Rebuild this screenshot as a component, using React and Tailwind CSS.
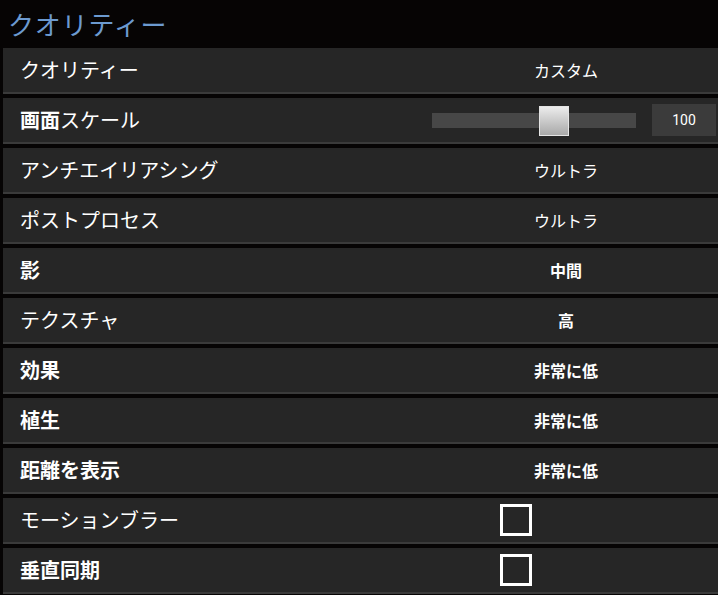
import React from 'react';

const rows = [
  { label: 'クオリティー', type: 'text', value: 'カスタム' },
  { label: ['画面', 'スケール'], type: 'slider', value: 100 },
  { label: 'アンチエイリアシング', type: 'text', value: 'ウルトラ' },
  { label: 'ポストプロセス', type: 'text', value: 'ウルトラ' },
  { label: '影', type: 'text', value: '中間', bold: true, valueBold: true },
  { label: 'テクスチャ', type: 'text', value: '高', valueBold: true },
  { label: '効果', type: 'text', value: '非常に低', bold: true, valueBold: true },
  { label: '植生', type: 'text', value: '非常に低', bold: true, valueBold: true },
  { label: '距離を表示', type: 'text', value: '非常に低', bold: true, valueBold: true },
  { label: 'モーションブラー', type: 'check' },
  { label: '垂直同期', type: 'check', bold: true },
];

function Control({ row }) {
  if (row.type === 'slider') {
    return (
      <div className="flex items-center">
        <div className="relative w-[204px] h-[15px] bg-[#474747]">
          <div className="absolute left-[107px] top-[-7px] w-[30px] h-[30px] border border-[#e4e4e4] bg-gradient-to-b from-[#ececec] to-[#a9a9a9]" />
        </div>
        <div className="ml-[16px] w-[64px] h-[32px] bg-[#3b3b3b] flex items-center justify-center text-[14px] text-white font-['Roboto',sans-serif]">
          {row.value}
        </div>
      </div>
    );
  }
  if (row.type === 'check') {
    return <div className="ml-[68px] w-[32px] h-[32px] border-[3px] border-white" />;
  }
  return (
    <div className={`w-[268px] text-center text-[16px] text-white ${row.valueBold ? 'font-bold' : ''}`}>
      {row.value}
    </div>
  );
}

function Label({ row }) {
  // mixed weight: kanji part bold, kana part regular
  if (Array.isArray(row.label)) {
    return (
      <>
        <span className="font-bold">{row.label[0]}</span>
        <span>{row.label[1]}</span>
      </>
    );
  }
  return row.label;
}

export default function App() {
  return (
    <div className="w-[718px] h-[595px] overflow-hidden bg-[#060404] font-['Noto_Sans_CJK_JP','Noto_Sans',sans-serif]">
      {/* Header */}
      <div className="h-[48px] flex items-center pl-[8px] pb-[1px] text-[26px] text-[#6c9ad0] tracking-[0.8px]">
        クオリティー
      </div>

      {/* Settings */}
      <div className="flex flex-col gap-[4px] pl-[3px]">
        {rows.map((row) => (
          <div
            key={String(row.label)}
            className="h-[46px] shrink-0 flex items-center bg-[#262626] border-b-2 border-[#3a3a3a]"
          >
            <div className={`w-[429px] pl-[17px] text-[20px] text-white ${row.bold ? 'font-bold' : ''}`}>
              <Label row={row} />
            </div>
            <Control row={row} />
          </div>
        ))}
      </div>
    </div>
  );
}
